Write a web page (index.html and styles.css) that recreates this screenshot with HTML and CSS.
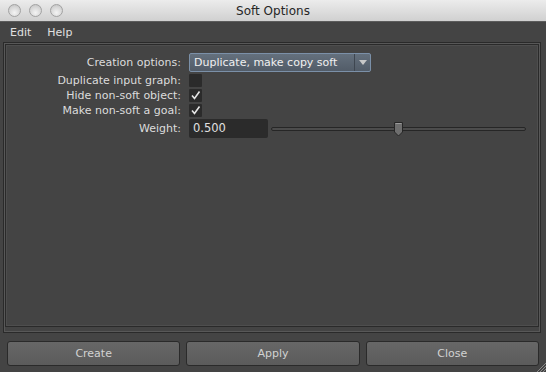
FILE: index.html
```html
<!DOCTYPE html>
<html lang="en">
<head>
    <meta charset="UTF-8">
    <title>Soft Options</title>
    <link rel="stylesheet" href="styles.css">
</head>
<body>

    <div class="window">

        <header class="titlebar">
            <div class="lights">
                <span class="light"></span>
                <span class="light"></span>
                <span class="light"></span>
            </div>
            <div class="title">Soft Options</div>
        </header>

        <nav class="menubar">
            <span class="menu-item">Edit</span>
            <span class="menu-item">Help</span>
        </nav>

        <main class="frame">
            <div class="frame-inner">
                <div class="form">
                    <label class="label">Creation options:</label>
                    <div class="dropdown">
                        <span class="dropdown-text">Duplicate, make copy soft</span>
                        <span class="dropdown-arrow">
                            <svg width="8" height="5" viewBox="0 0 8 5"><path d="M0 0 L8 0 L4 5 Z" fill="#c8c8c8"/></svg>
                        </span>
                    </div>

                    <label class="label">Duplicate input graph:</label>
                    <div class="checkbox"></div>

                    <label class="label">Hide non-soft object:</label>
                    <div class="checkbox">
                        <svg width="13" height="13" viewBox="0 0 13 13"><path d="M3 6.5 L5.5 9.5 L10.5 2.5" fill="none" stroke="#e6e6e6" stroke-width="1.6"/></svg>
                    </div>

                    <label class="label">Make non-soft a goal:</label>
                    <div class="checkbox">
                        <svg width="13" height="13" viewBox="0 0 13 13"><path d="M3 6.5 L5.5 9.5 L10.5 2.5" fill="none" stroke="#e6e6e6" stroke-width="1.6"/></svg>
                    </div>

                    <label class="label">Weight:</label>
                    <div class="weight">
                        <div class="field">0.500</div>
                        <div class="slider">
                            <div class="track"></div>
                            <svg class="thumb" style="left: 50%;" width="11" height="15" viewBox="0 0 11 15">
                                <path d="M1.5 0.5 H9.5 V10 L5.5 14 L1.5 10 Z" fill="#6e6e6e" stroke="#262626"/>
                                <path d="M2.5 1.5 H8.5" stroke="#9a9a9a"/>
                            </svg>
                        </div>
                    </div>
                </div>
            </div>
        </main>

        <footer class="buttons">
            <button class="btn">Create</button>
            <button class="btn">Apply</button>
            <button class="btn">Close</button>
        </footer>

        <svg class="grip" width="10" height="10" viewBox="0 0 10 10">
            <path d="M10 1 L1 10 M10 4 L4 10 M10 7 L7 10" stroke="#8a8a8a" stroke-width="1"/>
        </svg>

    </div>

</body>
</html>
```

FILE: styles.css
```css
/* --- Base --- */
:root {
    --bg: #444444;
    --line-dark: #2a2a2a;
    --line-light: #585858;
    --text: #dcdcdc;
    --field-bg: #2b2b2b;
}

body, html {
    margin: 0;
    padding: 0;
    height: 100%;
    background: var(--bg);
    font-family: 'DejaVu Sans', 'Lucida Grande', sans-serif;
    font-size: 11px;
    color: var(--text);
    overflow: hidden;
}

.window {
    position: relative;
    width: 546px;
    height: 372px;
    display: flex;
    flex-direction: column;
}

/* --- Title Bar --- */
.titlebar {
    position: relative;
    height: 21px;
    background: linear-gradient(#ececec, #d0d0d0);
    border-bottom: 1px solid #5c5c5c;
    display: flex;
    align-items: center;
    justify-content: center;
}

.lights {
    position: absolute;
    left: 8px;
    top: 4px;
    display: flex;
    gap: 8px;
}

.light {
    width: 11px;
    height: 11px;
    border-radius: 50%;
    border: 1px solid #a2a2a2;
    background: radial-gradient(circle at 50% 70%, #f4f4f4 0%, #d6d6d6 60%, #bdbdbd 100%);
}

.title {
    font-size: 12px;
    color: #262626;
}

/* --- Menu Bar --- */
.menubar {
    height: 20px;
    display: flex;
    align-items: center;
    gap: 16px;
    padding-left: 10px;
}

.menu-item {
    color: #e0e0e0;
}

/* --- Group Frame --- */
.frame {
    margin: 0 5px 0 3px;
    height: 287px;
    border: 1px solid var(--line-dark);
    box-shadow: inset 0 0 0 1px var(--line-light);
    padding: 1px;
    box-sizing: content-box;
}

.frame-inner {
    height: 283px;
    border: 1px solid var(--line-dark);
    box-shadow: inset 0 0 0 1px #4e4e4e;
    padding-top: 8px;
    box-sizing: border-box;
}

.form {
    display: grid;
    grid-template-columns: 175px 1fr;
    column-gap: 8px;
    row-gap: 2px;
    align-items: center;
    padding-right: 12px;
}

.label {
    text-align: right;
    white-space: nowrap;
}

/* --- Dropdown --- */
.dropdown {
    width: 180px;
    height: 17px;
    display: flex;
    border: 1px solid #7b90a8;
    border-radius: 2px;
    background: linear-gradient(#64707d, #525c68);
}

.dropdown-text {
    flex: 1;
    padding-left: 4px;
    line-height: 17px;
    color: #f0f0f0;
}

.dropdown-arrow {
    width: 15px;
    border-left: 1px solid #3e4650;
    display: flex;
    align-items: center;
    justify-content: center;
}

/* --- Checkboxes --- */
.checkbox {
    width: 13px;
    height: 13px;
    background: var(--field-bg);
    border-radius: 1px;
}

.checkbox svg {
    display: block;
}

/* --- Weight Field & Slider --- */
.weight {
    display: flex;
    align-items: center;
    gap: 3px;
}

.field {
    width: 75px;
    height: 19px;
    line-height: 19px;
    padding-left: 4px;
    background: var(--field-bg);
    border-radius: 2px;
    color: #e0e0e0;
    font-size: 11.5px;
}

.slider {
    position: relative;
    flex: 1;
    height: 16px;
    display: flex;
    align-items: center;
}

.track {
    width: 100%;
    height: 2px;
    border: 1px solid #262626;
    border-radius: 2px;
    background: #4c4c4c;
}

.thumb {
    position: absolute;
    top: 1px;
    margin-left: -6px;
}

/* --- Bottom Buttons --- */
.buttons {
    display: grid;
    grid-template-columns: repeat(3, 1fr);
    gap: 6px;
    padding: 0 7px;
    margin-top: 8px;
}

.btn {
    height: 25px;
    border: 1px solid var(--line-dark);
    border-radius: 3px;
    background: linear-gradient(#676767, #5b5b5b);
    color: #d2d2d2;
    font-family: 'DejaVu Sans', 'Lucida Grande', sans-serif;
    font-size: 11px;
    padding: 0;
}

.grip {
    position: absolute;
    right: 0;
    bottom: 0;
}
```
